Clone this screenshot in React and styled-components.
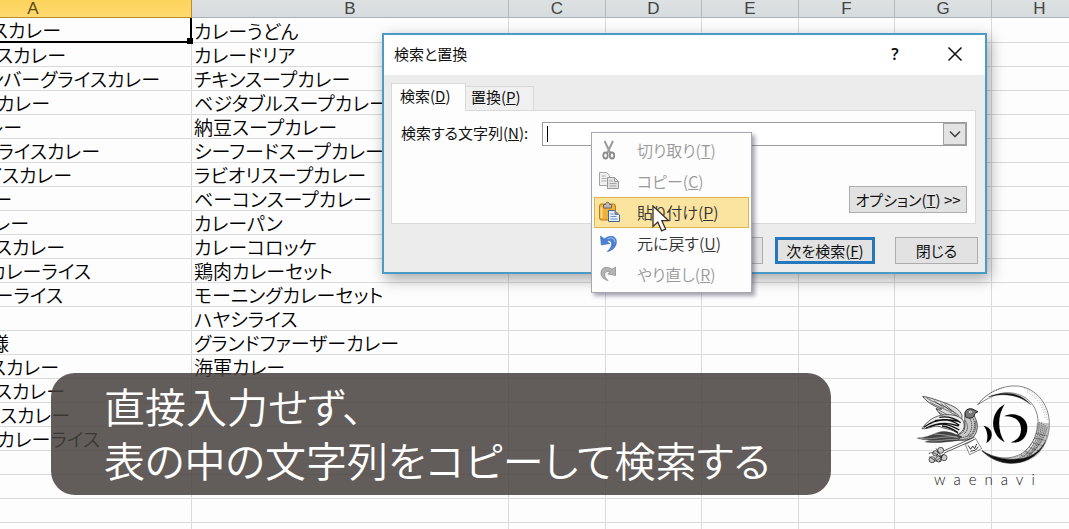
import React from "react";
import styled, { createGlobalStyle, css } from "styled-components";

const rows = [
  { a: "スカレー", end: 62, b: "カレーうどん" },
  { a: "スカレー", end: 66, b: "カレードリア" },
  { a: "ハンバーグライスカレー", end: 160, b: "チキンスープカレー" },
  { a: "カレー", end: 50, b: "ベジタブルスープカレー" },
  { a: "カレー", end: 22, b: "納豆スープカレー" },
  { a: "ライスカレー", end: 100, b: "シーフードスープカレー" },
  { a: "イスカレー", end: 72, b: "ラビオリスープカレー" },
  { a: "カレー", end: 12, b: "ベーコンスープカレー" },
  { a: "カレー", end: 29, b: "カレーパン" },
  { a: "スカレー", end: 65, b: "カレーコロッケ" },
  { a: "カレーライス", end: 91, b: "鶏肉カレーセット" },
  { a: "カレーライス", end: 63, b: "モーニングカレーセット" },
  { a: "", end: 0, b: "ハヤシライス" },
  { a: "様", end: 9, b: "グランドファーザーカレー" },
  { a: "スカレー", end: 59, b: "海軍カレー" },
  { a: "スカレー", end: 65, b: "" },
  { a: "スカレー", end: 70, b: "" },
  { a: "カレーライス", end: 100, b: "" },
  { a: "", end: 0, b: "" },
  { a: "", end: 0, b: "" },
  { a: "", end: 0, b: "" },
  { a: "", end: 0, b: "" },
];

const restColumns = ["C", "D", "E", "F", "G", "H"];

const App = () => (
  <Page>
    <GlobalStyle />
    <Sheet>
      <colgroup>
        <Col $width={317} />
        <Col $width={317} />
        {restColumns.map((name, i) => (
          <Col key={name} $width={i % 2 ? 96 : 97} />
        ))}
      </colgroup>
      <thead>
        <tr>
          <ColumnHead $active>A</ColumnHead>
          <ColumnHead>B</ColumnHead>
          {restColumns.map((name) => (
            <ColumnHead key={name}>{name}</ColumnHead>
          ))}
        </tr>
      </thead>
      <tbody>
        {rows.map((row, i) => (
          <tr key={i}>
            <Cell $end={row.end} $active={i === 0}>
              {row.a}
              {i === 0 && <FillHandle />}
            </Cell>
            <Cell>{row.b}</Cell>
            {restColumns.map((name) => (
              <Cell key={name} />
            ))}
          </tr>
        ))}
      </tbody>
    </Sheet>
    <FindDialog />
    <Caption>
      直接入力せず、
      <br />
      表の中の文字列をコピーして検索する
    </Caption>
    <Brand>
      <BrandMark />
      <BrandName>waenavi</BrandName>
    </Brand>
  </Page>
);

export default App;

const FindDialog = () => (
  <Dialog role="dialog" aria-labelledby="dialog-title">
    <TitleBar>
      <DialogTitle id="dialog-title">検索と置換</DialogTitle>
      <TitleButton>?</TitleButton>
      <TitleButton aria-label="閉じる">
        <svg width="16" height="16" viewBox="0 0 16 16">
          <path d="M1.5 1.5l13 13M14.5 1.5l-13 13" stroke="#111" strokeWidth="1.5" />
        </svg>
      </TitleButton>
    </TitleBar>
    <Tabs>
      <Tab $active>
        検索(<u>D</u>)
      </Tab>
      <Tab>
        置換(<u>P</u>)
      </Tab>
    </Tabs>
    <Panel>
      <Field>
        <FieldLabel htmlFor="find">
          検索する文字列(<u>N</u>):
        </FieldLabel>
        <Combo>
          <ComboInput id="find" type="text" />
          <Caret />
          <ComboButton aria-label="履歴">
            <svg width="12" height="8" viewBox="0 0 12 8">
              <path d="M1 1.5l5 5 5-5" fill="none" stroke="#444" strokeWidth="1.6" />
            </svg>
          </ComboButton>
        </Combo>
      </Field>
      <OptionsButton>
        オプション(<u>T</u>) &gt;&gt;
      </OptionsButton>
    </Panel>
    <Actions>
      <Button $width={110}>
        すべて検索(<u>I</u>)
      </Button>
      <Button $width={100} $primary>
        次を検索(<u>F</u>)
      </Button>
      <Button $width={83}>閉じる</Button>
    </Actions>
    <ContextMenu role="menu">
      <MenuItem disabled>
        <CutIcon />
        <span>
          切り取り(<u>T</u>)
        </span>
      </MenuItem>
      <MenuItem disabled>
        <CopyIcon />
        <span>
          コピー(<u>C</u>)
        </span>
      </MenuItem>
      <MenuItem $hover>
        <PasteIcon />
        <span>
          貼り付け(<u>P</u>)
        </span>
        <Pointer width="18" height="28" viewBox="0 0 18 28">
          <path
            d="M1 1v20.500l4.800-4.400 3.800 8.700 4-1.700-3.800-8.500h6.700z"
            fill="#fff"
            stroke="#3a3028"
            strokeWidth="1.300"
          />
        </Pointer>
      </MenuItem>
      <MenuItem>
        <UndoIcon />
        <span>
          元に戻す(<u>U</u>)
        </span>
      </MenuItem>
      <MenuItem disabled>
        <RedoIcon />
        <span>
          やり直し(<u>R</u>)
        </span>
      </MenuItem>
    </ContextMenu>
  </Dialog>
);

const CutIcon = () => (
  <svg width="22" height="22" viewBox="0 0 22 22">
    <path d="M6.500 2l5.800 12M15 2L9.300 14" fill="none" stroke="#9b9b9b" strokeWidth="2" />
    <ellipse cx="7.500" cy="16.500" rx="2.200" ry="3" fill="none" stroke="#8a8a8a" strokeWidth="1.800" />
    <ellipse cx="14" cy="16.500" rx="2.200" ry="3" fill="none" stroke="#8a8a8a" strokeWidth="1.800" />
  </svg>
);

const CopyIcon = () => (
  <svg width="22" height="22" viewBox="0 0 22 22">
    <path d="M1.500 2.500h7l3 3v10h-10z" fill="#f1f1f1" stroke="#a4a4a4" />
    <path d="M3.500 6h4M3.500 8.500h5M3.500 11h5" stroke="#aaa" />
    <path d="M9.500 7.500h7l4 4v7h-11z" fill="#e2e2e2" stroke="#979797" />
    <path d="M16.500 7.500v4h4" fill="none" stroke="#979797" />
    <path d="M11.500 11h3M11.500 13.500h7M11.500 16h7" stroke="#a4a4a4" />
  </svg>
);

const PasteIcon = () => (
  <svg width="22" height="22" viewBox="0 0 22 22">
    <rect x="1.500" y="3" width="16" height="16" rx="2" fill="#eeb13c" stroke="#b97a1a" />
    <path d="M3.500 6v11" stroke="#fbd985" strokeWidth="2" />
    <path d="M5.500 3.500h2c0-3 4-3 4 0h2V7h-8z" fill="#bcb9b3" stroke="#6c675e" />
    <path d="M10.500 9.500h6l5 4.500v6.500h-11z" fill="#e4edf8" stroke="#4b6489" />
    <path d="M12.500 13h3M12.500 15.500h6M12.500 18h7" stroke="#6f8fbe" />
    <path d="M16.500 9.500V14h5z" fill="#6b84a8" />
  </svg>
);

const UndoIcon = () => (
  <svg width="22" height="22" viewBox="0 0 22 22">
    <path d="M2.500 4l.8 9 8.500-1.500-3-2.300c3.300-1.700 5 .2 4.700 3.500-.2 2.500-1.800 4.800-4.300 6.800 5-.6 9.300-4.600 9.200-9.800C18.300 4 12.500 2.500 6.300 6.800z" fill="#4c80d3" stroke="#336bc0" strokeWidth=".6" />
    <path d="M9.500 7c4-2.300 7.500-.6 7.500 3.500" fill="none" stroke="#8fb3ea" strokeWidth="1.200" />
  </svg>
);

const RedoIcon = () => (
  <svg width="22" height="22" viewBox="0 0 22 22">
    <path d="M17.500 4v8.500L9.800 11l2.400-2c-3.300-1.300-5.700.2-5.500 3 .1 1.800 1.200 3.500 3.300 5.500-4-.7-7.300-4-7-8 .4-5 5.800-6.900 11-3.200z" fill="#b4b4b4" stroke="#8f8f8f" strokeWidth=".8" />
  </svg>
);

const BrandMark = () => (
  <svg width="150" height="92" viewBox="0 0 450 276" fill="none" stroke="#111" aria-hidden="true">
    {/* crescent ring */}
    <path d="M203 74C232 35 280 15 322 18c55 4 96 55 96 113 0 68-52 118-112 119-36 0-68-14-90-38 46 30 100 29 134-3 34-34 44-86 24-125-20-37-64-53-104-43-22 6-42 17-67 33z" strokeWidth="1.500" fill="#fff" fillOpacity=".5" />
    <path d="M236 50c46-18 95-14 126 24-34-29-78-37-126-24z" fill="#111" />
    <path d="M384 126c2 50-22 88-58 104-14 8-34 12-50 14 46 14 98 0 122-38 16-22 22-48 20-76z" fill="#999" fillOpacity=".6" stroke="none" />
    <path d="M216 212c28 26 62 40 98 37 40-3 76-27 92-64-20 34-48 50-84 52-40 3-76-6-106-25z" fill="#111" />
    <g strokeWidth="1.500" strokeDasharray="4 2">
      <path d="M382 130c-2 36-14 62-40 88M388 126c0 40-14 70-42 98M394 128c-1 42-16 74-46 102M400 132c-4 42-20 74-52 100M406 136c-6 40-24 70-54 96M411 142c-8 34-26 62-54 84M280 236c30 0 50-6 72-22M284 242c32 0 56-10 74-26" />
      <path d="M378 160l34 8M374 174l34 8M368 188l32 10M358 202l32 12M346 214l28 14M332 224l24 14" />
      <path d="M344 26c40 16 64 54 68 94M352 36c32 18 50 48 54 80M212 62c20-20 46-34 70-38" strokeDasharray="2 6" />
    </g>
    {/* numeral strokes inside the ring */}
    <g fill="#000" stroke="none">
      <path d="M284 73c-46 24-46 90 0 114-22-34-22-80 0-114z" />
      <path d="M282 109c34-16 70 2 70 34 0 34-24 48-50 44 20-6 30-18 31-38 1-26-18-42-51-40z" />
      <path d="M221 137c30 6 32 40 8 52 6-18 4-36-8-52z" />
    </g>
    {/* raised wing */}
    <path d="M38 49c20 2 50 14 76 23 22 9 36 18 42 34l-2 32c-30-8-62-26-76-52 8 2 12 2 17 1-24-8-46-22-57-38z" fill="#ddd" strokeWidth="2" />
    <path d="M50 54c28 18 66 26 98 54M60 66c28 18 58 22 90 52M78 86c26 14 48 24 74 42M86 96c22 14 40 22 64 34M104 72c14 14 32 26 46 46M72 62l30 22M92 70l34 26" strokeWidth="1.500" />
    {/* body */}
    <path d="M166 97c2-9 14-12 23-9l4 20c4 10 10 18 9 34-2 24-16 38-42 39-22 1-60-2-76-9 26 0 68-4 76-18 9-16 1-30 6-57z" fill="#c8c8c8" strokeWidth="2" />
    <path d="M166 122c10 16 8 30-4 40M178 112c12 20 10 40-8 58M188 112c10 20 8 42-12 60M196 124c4 20-2 36-18 50M110 172c24 4 50 4 72-8M124 178c20 2 36 2 52-4" strokeWidth="2" strokeDasharray="4 2" />
    {/* near wing */}
    <path d="M36 146c14-20 30-34 56-40 28-5 56 0 66 14 10 16 4 32-12 42-24-18-42-14-56-22-18-6-34 8-54 6z" fill="#eee" strokeWidth="2" />
    <path d="M42 142c22-18 54-30 104-18M48 144c28-14 60-20 98-6M60 140c30-12 54-10 88 10M74 122c30-6 52-4 74 14M88 112c26-4 46 2 64 16M96 138c16 2 34 10 48 20" strokeWidth="4" />
    {/* tail */}
    <path d="M22 174c20 0 40-8 60-16 28-10 50 4 74 12l-16 12c-34 4-60 8-94 4l14-6c-16 0-28-2-38-6z" fill="#444" strokeWidth="1" />
    <path d="M30 175c34 6 68-8 112-4M48 182c34 4 64-6 96-4M72 162c28 2 50 4 74 12" stroke="#ddd" strokeWidth="1.500" />
    {/* head */}
    <path d="M165 98c2-10 14-14 24-10l15 7-9 5c-2 6-4 10-8 13-8 3-16 1-21-3z" fill="#777" strokeWidth="2.500" />
    <circle cx="181" cy="96" r="4" fill="#fff" stroke="none" />
    <circle cx="181" cy="96" r="1.500" fill="#111" stroke="none" />
    {/* key */}
    <path d="M100 213l94-42M103 219l94-42" strokeWidth="2" />
    <path d="M166 194l31-18 18 30-36 18z" fill="#fff" strokeWidth="1.500" />
    <path d="M174 196l8 12 6-10 6 8 6-14M181 214l16-4 8-10" strokeWidth="2.500" />
    <g strokeWidth="2" fill="#ccc">
      <circle cx="92" cy="211" r="9" />
      <circle cx="76" cy="220" r="8" />
      <circle cx="66" cy="239" r="9" />
      <circle cx="86" cy="237" r="9" />
      <circle cx="102" cy="233" r="9" />
      <path d="M56 221c14-8 22 2 34 8M78 205l18 28M58 230l20 14 26-24M88 246l10-22" fill="none" />
    </g>
  </svg>
);

const GlobalStyle = createGlobalStyle`
  * {
    box-sizing: border-box;
  }
  body {
    margin: 0;
    overflow: hidden;
    font-family: "Noto Sans CJK JP", sans-serif;
    font-feature-settings: "palt";
    color: #111;
  }
  button,
  input {
    padding: 0;
    font: inherit;
    font-feature-settings: inherit;
    color: inherit;
  }
  svg {
    display: block;
  }
`;

const Page = styled.main`
  position: relative;
  height: 100vh;
  overflow: hidden;
  background: #fdfdfd;
`;

const Sheet = styled.table`
  width: 1213px;
  margin-left: -125px;
  table-layout: fixed;
  border-collapse: separate;
  border-spacing: 0;
`;

const Col = styled.col`
  width: ${(props) => props.$width}px;
`;

const ColumnHead = styled.th`
  height: 18px;
  padding: 0;
  border-right: 1px solid #b4bbbf;
  border-bottom: 1px solid #a9b4ba;
  background: linear-gradient(#dde1e2, #d6dbdd);
  color: #444;
  font-family: "Liberation Sans", sans-serif;
  font-size: 17px;
  font-weight: 400;
  line-height: 17px;

  ${(props) =>
    props.$active &&
    css`
      border-color: #b98f2e;
      background: linear-gradient(#fcd35c, #ffda6e);
      color: #5c4a1c;
    `}
`;

const Cell = styled.td`
  position: relative;
  height: 24px;
  padding: 0 0 0 2px;
  border-right: 1px solid #d9dadb;
  border-bottom: 1px solid #d9dadb;
  color: #000;
  font-size: 19px;
  font-weight: 350;
  line-height: 23px;
  white-space: nowrap;

  ${(props) =>
    props.$end !== undefined &&
    css`
      padding: 0 ${191 - props.$end}px 0 0;
      text-align: right;
    `}

  ${(props) =>
    props.$active &&
    css`
      height: 25px;
      border-right: 2px solid #000;
      border-bottom: 2px solid #000;
    `}
`;

const FillHandle = styled.span`
  position: absolute;
  right: -3px;
  bottom: -3px;
  z-index: 1;
  width: 6px;
  height: 6px;
  background: #000;
`;

const Dialog = styled.section`
  position: absolute;
  top: 33px;
  left: 382px;
  width: 605px;
  border: 2px solid #4b9bc6;
  background: #ececec;
  box-shadow: 3px 5px 14px rgba(0, 0, 0, 0.35);
  font-size: 15px;
`;

const TitleBar = styled.header`
  display: flex;
  align-items: center;
  height: 40px;
  padding: 0 0 3px 10px;
  background: #fff;
`;

const DialogTitle = styled.h1`
  flex: 1;
  margin: 0;
  font-size: 15px;
  font-weight: 400;
`;

const TitleButton = styled.button`
  display: flex;
  align-items: center;
  justify-content: center;
  width: 60px;
  height: 32px;
  border: 0;
  background: none;
  font-family: "Noto Sans", sans-serif;
  font-size: 16px;
  font-weight: 600;
`;

const Tabs = styled.div`
  display: flex;
  align-items: flex-end;
  margin: 8px 0 -1px 7px;
`;

const Tab = styled.button`
  width: 68px;
  height: 25px;
  padding: 0 10px 3px 5px;
  border: 1px solid #d9d9d9;
  border-left: 0;
  background: #f0f0f0;
  line-height: 20px;
  text-align: left;
  white-space: nowrap;

  ${(props) =>
    props.$active &&
    css`
      position: relative;
      width: 75px;
      height: 28px;
      padding: 0 12px 3px 8px;
      border-left: 1px solid #d9d9d9;
      border-bottom: 0;
      background: #fdfdfd;
    `}
`;

const Panel = styled.div`
  display: flex;
  flex-direction: column;
  justify-content: space-between;
  height: 114px;
  margin: 0 9px 0 7px;
  padding: 11px 8px 10px 9px;
  border: 1px solid #dadada;
  background: #fdfdfd;
`;

const Field = styled.div`
  display: flex;
  align-items: center;
  gap: 14px;
  white-space: nowrap;
`;

const FieldLabel = styled.label`
  padding-bottom: 3px;
`;

const Combo = styled.div`
  display: flex;
  flex: 1;
  position: relative;
  height: 24px;
  border: 1px solid #9c9c9c;
  background: #fff;
`;

const ComboInput = styled.input`
  flex: 1;
  min-width: 0;
  padding: 0 4px;
  border: 0;
  background: none;
`;

const Caret = styled.span`
  position: absolute;
  top: 3px;
  left: 4px;
  width: 1px;
  height: 16px;
  background: #000;
`;

const ComboButton = styled.button`
  display: flex;
  align-items: center;
  justify-content: center;
  width: 23px;
  border: 1px solid #a3a3a3;
  background: #e3e3e3;
`;

const Button = styled.button`
  width: ${(props) => props.$width}px;
  height: 27px;
  border: ${(props) => (props.$primary ? "3px solid #2678bd" : "1px solid #adadad")};
  background: #e2e2e2;
  line-height: 20px;
  white-space: nowrap;
`;

const OptionsButton = styled(Button)`
  align-self: flex-end;
  width: 118px;
`;

const Actions = styled.footer`
  display: flex;
  justify-content: flex-end;
  gap: 12px;
  padding: 13px 7px 8px;

  ${Button}:last-child {
    margin-left: 8px;
  }
`;

const ContextMenu = styled.div`
  position: absolute;
  top: 97px;
  left: 207px;
  width: 161px;
  padding: 2px;
  border: 1px solid #a6a6ae;
  background: #fdfdfd;
  box-shadow: 3px 3px 4px rgba(60, 60, 90, 0.45);
`;

const MenuItem = styled.button`
  display: flex;
  align-items: center;
  gap: 17px;
  position: relative;
  width: 100%;
  height: 31px;
  padding: 0 3px 2px;
  border: 1px solid ${(props) => (props.$hover ? "#dfb64e" : "transparent")};
  background: ${(props) => (props.$hover ? "#fbe3a0" : "none")};
  color: ${(props) => (props.disabled ? "#999" : "#333")};
  font-size: 16px;
  font-weight: 350;
  line-height: 26px;
  white-space: nowrap;
`;

const Pointer = styled.svg`
  position: absolute;
  top: 7px;
  left: 57px;
`;

const Caption = styled.p`
  position: absolute;
  top: 373px;
  left: 51px;
  width: 780px;
  margin: 0;
  padding: 5px 53px 9px;
  border-radius: 24px;
  background: rgba(70, 65, 61, 0.85);
  color: #fff;
  font-size: 41px;
  font-weight: 350;
  line-height: 54px;
  white-space: nowrap;
`;

const Brand = styled.div`
  position: absolute;
  top: 380px;
  right: 9px;
`;

const BrandName = styled.div`
  padding-left: 24px;
  font-family: Lato, sans-serif;
  font-size: 15px;
  font-weight: 300;
  letter-spacing: 8px;
  line-height: 14px;
`;
